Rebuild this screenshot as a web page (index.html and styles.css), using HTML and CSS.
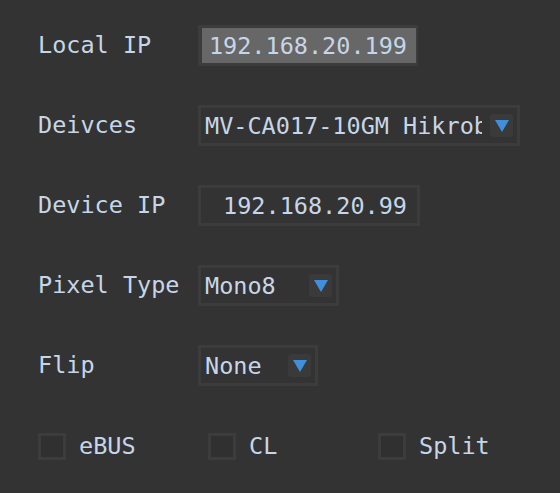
FILE: index.html
```html
<!DOCTYPE html>
<html>
<head>
<meta charset="utf-8">
<link rel="stylesheet" href="styles.css">
</head>
<body>
<div class="panel">
  <div class="form">
    <div class="label">Local IP</div>
    <div class="field ip-local"><span>192.168.20.199</span></div>

    <div class="label">Deivces</div>
    <div class="field combo combo-dev"><span class="ctext">MV-CA017-10GM Hikrobot</span><span class="btn"><span class="tri"></span></span></div>

    <div class="label">Device IP</div>
    <div class="field ip-dev"><span>192.168.20.99</span></div>

    <div class="label">Pixel Type</div>
    <div class="field combo combo-pix"><span class="ctext">Mono8</span><span class="btn"><span class="tri"></span></span></div>

    <div class="label">Flip</div>
    <div class="field combo combo-flip"><span class="ctext">None</span><span class="btn"><span class="tri"></span></span></div>
  </div>
  <div class="checks">
    <label class="check c1"><span class="box"></span><span>eBUS</span></label>
    <label class="check c2"><span class="box"></span><span>CL</span></label>
    <label class="check c3"><span class="box"></span><span>Split</span></label>
  </div>
</div>
</body>
</html>
```
FILE: styles.css
```css
html, body {
  margin: 0;
  padding: 0;
  background: #333333;
  width: 560px;
  height: 493px;
  overflow: hidden;
}
.panel {
  padding: 25px 0 0 38px;
  font-family: "DejaVu Sans Mono", monospace;
  font-size: 23.5px;
  color: #c6d6e8;
}
.form {
  display: grid;
  grid-template-columns: 160px auto;
  grid-auto-rows: 41px;
  row-gap: 39px;
  align-items: center;
}
.label {
  line-height: 41px;
  white-space: nowrap;
}
.field {
  box-sizing: border-box;
  height: 41px;
  border: 3px solid #3c3c3c;
  display: flex;
  align-items: center;
  white-space: nowrap;
  overflow: hidden;
}
.ip-local {
  width: 220px;
  background: #676767;
  justify-content: flex-end;
  padding-right: 9px;
  border-width: 3px 2px 3px 4px;
}
.ip-dev {
  width: 222px;
  justify-content: flex-end;
  padding-right: 10px;
}
.combo {
  padding-left: 4px;
  padding-right: 4px;
}
.ctext {
  flex: 1;
  overflow: hidden;
  white-space: nowrap;
}
.combo-dev { width: 322px; }
.combo-pix { width: 141px; }
.combo-flip { width: 120px; }
.btn {
  flex: none;
  width: 23px;
  height: 23px;
  margin-left: 8px;
  background: #3a3a3a;
  border-radius: 3px;
  display: flex;
  align-items: center;
  justify-content: center;
}
.tri {
  width: 0;
  height: 0;
  border-left: 7px solid transparent;
  border-right: 7px solid transparent;
  border-top: 12px solid #3f8fdc;
  margin-top: 1px;
}
.checks {
  display: flex;
  margin-top: 46px;
  height: 28px;
  align-items: center;
}
.check {
  display: flex;
  align-items: center;
  gap: 13px;
}
.c1 { width: 170px; }
.c2 { width: 170px; }
.box {
  box-sizing: border-box;
  width: 28px;
  height: 27px;
  border: 3px solid #3c3c3c;
  background: #303030;
}
```
